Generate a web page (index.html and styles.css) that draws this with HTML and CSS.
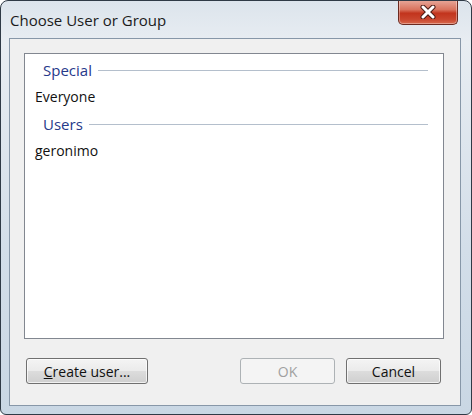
FILE: index.html
```html
<!DOCTYPE html>
<html lang="en">
<head>
    <meta charset="UTF-8">
    <meta name="viewport" content="width=device-width, initial-scale=1.0">
    <title>Choose User or Group</title>
    <link rel="stylesheet" href="styles.css">
</head>
<body>
    <div class="window">
        <div class="titlebar">
            <span class="title">Choose User or Group</span>
            <button class="close" aria-label="Close">
                <svg width="20" height="14" viewBox="0 0 20 14">
                    <path d="M5 2 L15 12 M15 2 L5 12" stroke="#4a1a14" stroke-width="5" stroke-linecap="round"/>
                    <path d="M5 2 L15 12 M15 2 L5 12" stroke="#ffffff" stroke-width="3" stroke-linecap="round"/>
                </svg>
            </button>
        </div>
        <div class="client">
            <div class="list">
                <div class="group"><span>Special</span><div class="rule"></div></div>
                <div class="item">Everyone</div>
                <div class="group"><span>Users</span><div class="rule"></div></div>
                <div class="item">geronimo</div>
            </div>
            <div class="buttons">
                <button class="btn create"><u>C</u>reate user...</button>
                <div class="spacer"></div>
                <button class="btn" disabled>OK</button>
                <button class="btn cancel">Cancel</button>
            </div>
        </div>
    </div>
</body>
</html>
```

FILE: styles.css
```css
body {
    margin: 0;
    background-color: #ffffff;
    font-family: "Open Sans", "Noto Sans", sans-serif;
}
.window {
    width: 472px;
    height: 415px;
    box-sizing: border-box;
    border: 1px solid #2f3a46;
    border-radius: 8px 8px 6px 6px;
    background: linear-gradient(to bottom, #dce4ec 0%, #e8edf2 10%, #d3dee9 60%, #c9d7e4 100%);
    display: flex;
    flex-direction: column;
    padding: 0 10px 8px 8px;
    overflow: hidden;
}
.titlebar {
    height: 37px;
    display: flex;
    justify-content: space-between;
    align-items: flex-start;
    flex-shrink: 0;
}
.title {
    font-size: 15px;
    color: #1b1b1b;
    padding: 9px 0 0 1px;
}
.close {
    width: 60px;
    height: 25px;
    margin: -1px 3px 0 0;
    border: 1px solid #6b2a20;
    border-top: none;
    border-radius: 0 0 5px 5px;
    background: linear-gradient(to bottom, #e7a99b 0%, #d9735e 40%, #c2341d 55%, #c9452d 80%, #d86a4e 100%);
    display: flex;
    justify-content: center;
    align-items: center;
    padding: 0;
    box-shadow: inset 0 0 0 1px rgba(255,255,255,0.35);
}
.client {
    flex: 1;
    background-color: #f0f0f0;
    border: 1px solid #8797a8;
    display: flex;
    flex-direction: column;
    padding: 14px 16px 21px 14px;
}
.list {
    flex: 1;
    background-color: #ffffff;
    border: 1px solid #828790;
    padding: 2px 15px 0 0;
}
.group {
    height: 27px;
    display: flex;
    align-items: center;
    padding-left: 18px;
    font-size: 15px;
    color: #26398a;
}
.rule {
    flex: 1;
    height: 1px;
    background-color: #b4bfcc;
    margin-left: 6px;
    margin-top: 1px;
}
.item {
    height: 27px;
    line-height: 27px;
    padding-left: 10px;
    font-size: 14px;
    color: #111111;
}
.buttons {
    display: flex;
    margin-top: 19px;
    padding: 0 3px 0 2px;
    gap: 11px;
}
.spacer {
    flex: 1;
}
.btn {
    width: 95px;
    height: 26px;
    border: 1px solid #707070;
    border-radius: 3px;
    background: linear-gradient(to bottom, #f4f4f4 0%, #ebebeb 48%, #dcdcdc 52%, #cfcfcf 100%);
    font-family: "Open Sans", "Noto Sans", sans-serif;
    font-size: 14px;
    color: #111111;
    padding: 0;
    box-shadow: inset 0 0 0 1px rgba(255,255,255,0.7);
}
.btn.create {
    width: 122px;
}
.btn:disabled {
    border-color: #adb2b5;
    background: #f4f4f4;
    color: #a0a0a0;
    box-shadow: none;
}
```
